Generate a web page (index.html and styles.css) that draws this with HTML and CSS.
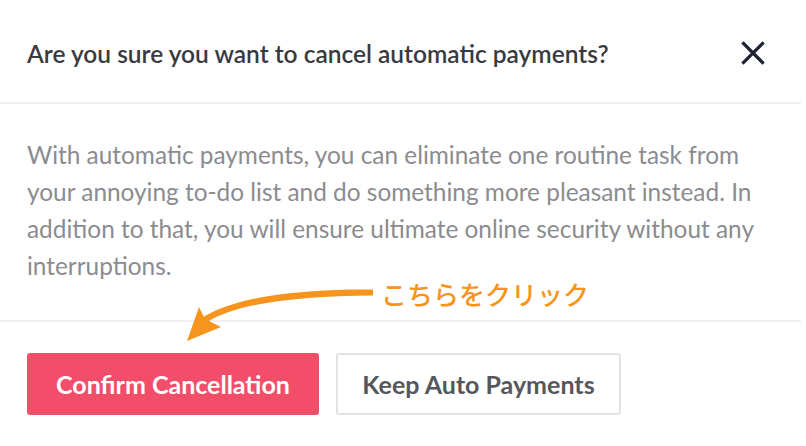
FILE: index.html
```html
<!DOCTYPE html>
<html lang="en">
<head>
  <meta charset="UTF-8" />
  <meta name="viewport" content="width=device-width, initial-scale=1" />
  <title>Cancel automatic payments</title>
  <link rel="stylesheet" href="styles.css">
</head>
<body>
  <div class="dialog">
    <div class="dialog-header">
      <h2 class="dialog-title">Are you sure you want to cancel automatic payments?</h2>
      <button class="close-btn" aria-label="Close">
        <svg width="24" height="24" viewBox="0 0 24 24">
          <path d="M2.5 2.5 L21.5 21.5 M21.5 2.5 L2.5 21.5" stroke="#1f2433" stroke-width="3.2" stroke-linecap="square" fill="none"/>
        </svg>
      </button>
    </div>

    <div class="dialog-body">
      <p>With automatic payments, you can eliminate one routine task from your annoying to-do list and do something more pleasant instead. In addition to that, you will ensure ultimate online security without any <span>interruptions.</span></p>
    </div>

    <div class="dialog-footer">
      <button class="btn btn-danger">Confirm Cancellation</button>
      <button class="btn btn-outline">Keep Auto Payments</button>
    </div>

    <!-- annotation over the dialog -->
    <div class="note" lang="ja">こちらをクリック</div>
    <svg class="note-arrow" width="806" height="446" viewBox="0 0 806 446">
      <path d="M373 289.5 C300 289 236 296 202 318 L207 322 C240 302 300 296.5 373 295.5 Z" fill="#f7941d"/>
      <path d="M187 341 L199 307 L205 319 L221 327 Z" fill="#f7941d"/>
    </svg>
  </div>
</body>
</html>
```

FILE: styles.css
```css
body {
  margin: 0;
  background: #fff;
  font-family: Lato, "Open Sans", sans-serif;
}
.dialog {
  position: relative;
  width: 801px;
  height: 446px;
  background: #fff;
}
.dialog-header {
  height: 104px;
  display: flex;
  align-items: center;
  justify-content: space-between;
  padding: 4px 36px 0 27px;
  box-sizing: border-box;
  border-bottom: 2px solid #f0f0f0;
}
.dialog-title {
  margin: 0;
  font-size: 24.5px;
  font-weight: 600;
  color: #393a41;
}
.close-btn {
  width: 24px;
  height: 24px;
  padding: 0;
  border: none;
  background: none;
  display: flex;
}
.dialog-body {
  padding: 32px 27px 36px;
  border-bottom: 2px solid #f0f0f0;
}
.dialog-body p {
  margin: 0;
  font-size: 24.4px;
  line-height: 37px;
  color: #8b8b90;
}
.dialog-footer {
  display: flex;
  gap: 17px;
  padding: 31px 27px 0;
}
.btn {
  height: 62px;
  font-family: Lato, "Open Sans", sans-serif;
  font-size: 25px;
  font-weight: 700;
  border-radius: 3px;
  cursor: pointer;
}
.btn-danger {
  width: 292px;
  background: #f24e69;
  color: #fff;
  border: none;
}
.btn-outline {
  width: 285px;
  background: #fff;
  color: #55575d;
  border: 2px solid #e2e2e2;
}
.note {
  position: absolute;
  left: 381px;
  top: 286px;
  font-family: "Noto Sans CJK JP", sans-serif;
  font-size: 26px;
  font-weight: 500;
  line-height: 16px;
  color: #f7941d;
}
.note-arrow {
  position: absolute;
  left: 0;
  top: 0;
  pointer-events: none;
}
```
